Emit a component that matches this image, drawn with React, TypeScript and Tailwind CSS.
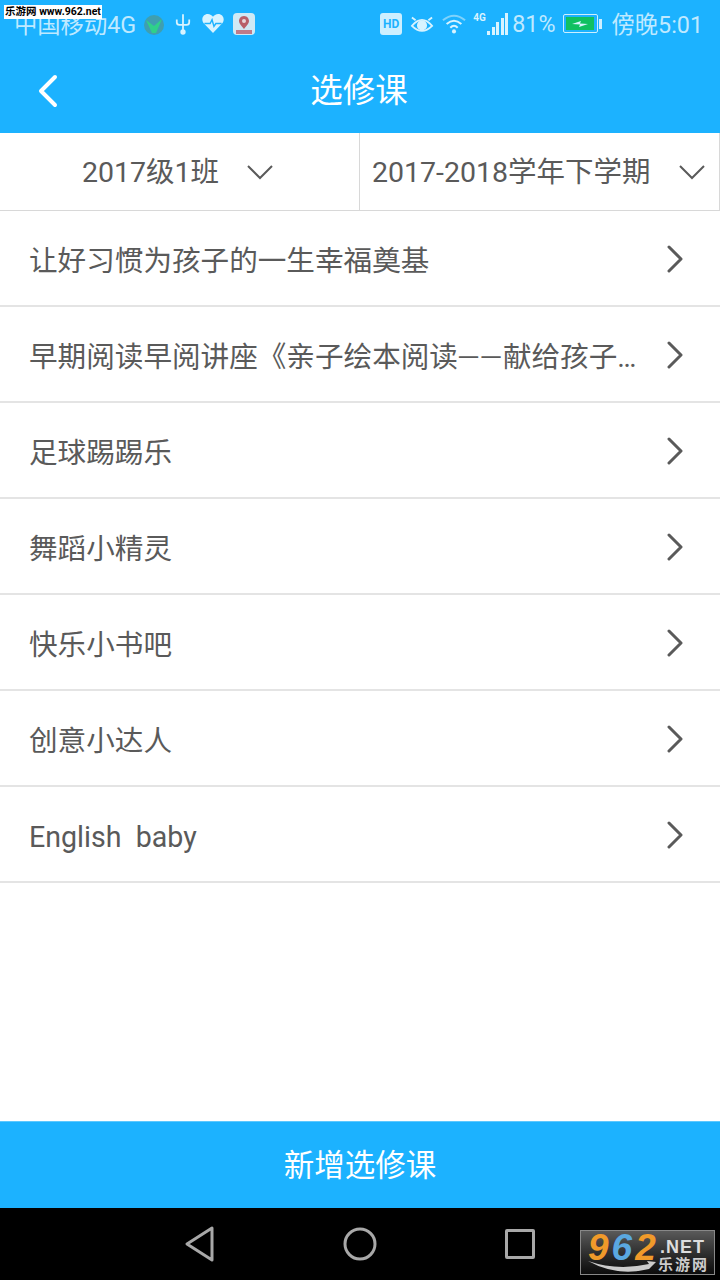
import React from "react";

const courses: React.ReactNode[] = [
  "让好习惯为孩子的一生幸福奠基",
  <>
    早期阅读早阅讲座《亲子绘本阅读
    <span className="align-[2px] text-[21px] tracking-[1.5px]">一一</span>
    献给孩子的礼物》
  </>,
  "足球踢踢乐",
  "舞蹈小精灵",
  "快乐小书吧",
  "创意小达人",
  "English  baby",
];

const font = "font-['Roboto','Noto_Sans_CJK_SC',sans-serif]";

const StatusBar = () => (
  <div className="flex h-[48px] items-center justify-between pl-[14px] pr-[17px] text-[23.3px] leading-none text-[#bfe9ff]">
    <div className="flex items-center">
      <span className="mt-[4px]">中国移动4G</span>
      {/* app icon */}
      <svg width="22" height="22" viewBox="0 0 22 22" className="ml-[7px] mt-[2px]">
        <circle cx="11" cy="11" r="10" fill="#3f9fb0" />
        <path d="M3 6 L11 12 L19 5 L13 19 L9 19 Z" fill="#2fd08a" />
      </svg>
      {/* usb */}
      <svg width="16" height="24" viewBox="0 0 18 24" fill="none" stroke="#d8f3ff" strokeWidth="2" className="ml-[10px] mt-[1px]">
        <path d="M9 1 V23 M2 7 V10 Q2 13 5 13 H13 Q16 13 16 10 V7" />
        <circle cx="9" cy="21" r="2" fill="#d8f3ff" />
      </svg>
      {/* heart */}
      <svg width="24" height="21" viewBox="0 0 24 22" className="ml-[10px]">
        <path d="M12 21 L2 10.5 C-1 6 2 1 6.5 1 C9 1 11 2.5 12 4 C13 2.5 15 1 17.5 1 C22 1 25 6 22 10.5 Z" fill="#d8f3ff" />
        <path d="M3 11 H9 L11 7 L13 14 L15 11 H21" fill="none" stroke="#1cb2ff" strokeWidth="1.5" />
      </svg>
      {/* map pin app */}
      <div className="ml-[8px] h-[22px] w-[22px] overflow-hidden rounded-[4px] bg-[#cfe9f5]">
        <svg width="22" height="22" viewBox="0 0 22 22">
          <path d="M11 3 C7.5 3 6 6 6 8 C6 11 9 13 11 16 C13 13 16 11 16 8 C16 6 14.5 3 11 3 Z" fill="#b8606a" />
          <circle cx="11" cy="8" r="2" fill="#e8d8dc" />
          <rect x="3" y="17" width="16" height="4" fill="#c07a88" />
        </svg>
      </div>
    </div>
    <div className="flex items-center">
      <div className="flex h-[22px] w-[22px] items-center justify-center rounded-[3px] bg-[#cdefff] text-[12px] font-bold text-[#1cb2ff]">
        HD
      </div>
      {/* eye */}
      <svg width="24" height="22" viewBox="0 0 26 24" fill="none" stroke="#d8f3ff" strokeWidth="2" className="ml-[8px]">
        <path d="M2 5 L6 8 M24 5 L20 8 M2 14 Q13 1 24 14 Q13 25 2 14 Z" />
        <circle cx="13" cy="13.5" r="4.5" fill="#d8f3ff" />
      </svg>
      {/* wifi */}
      <svg width="24" height="22" viewBox="0 0 26 22" fill="none" strokeWidth="2.2" className="ml-[8px]">
        <path d="M1 7 Q13 -3 25 7" stroke="#7fd2fb" />
        <path d="M5 11 Q13 4 21 11" stroke="#d8f3ff" />
        <path d="M9 15 Q13 11 17 15" stroke="#d8f3ff" />
        <circle cx="13" cy="19" r="2.2" fill="#d8f3ff" stroke="none" />
      </svg>
      {/* signal */}
      <div className="relative ml-[7px] flex h-[22px] w-[35px] items-end justify-end gap-[1.5px]">
        <span className="absolute left-0 top-0 text-[10px] font-bold leading-none text-[#d8f3ff]">4G</span>
        <div className="h-[4px] w-[3px] bg-[#d8f3ff]" />
        <div className="h-[8px] w-[3px] bg-[#d8f3ff]" />
        <div className="h-[13px] w-[3px] bg-[#d8f3ff]" />
        <div className="h-[17px] w-[3px] bg-[#d8f3ff]" />
        <div className="h-[22px] w-[3px] bg-[#d8f3ff]" />
      </div>
      <span className="ml-[4px] mt-[1px]">81%</span>
      {/* battery */}
      <div className="ml-[8px] flex items-center">
        <div className="flex h-[19px] w-[35px] items-center rounded-[2px] border border-[#cdefff] p-[2px]">
          <div className="flex h-full w-[28px] items-center justify-center bg-[#10c060]">
            <svg width="16" height="8" viewBox="0 0 16 8">
              <path d="M0 4 L9 1 L8 3.5 L16 4 L7 7 L8 4.5 Z" fill="#d8f3ff" />
            </svg>
          </div>
        </div>
        <div className="ml-[1px] h-[10px] w-[3px] bg-[#cdefff]" />
      </div>
      <span className="ml-[9px] mt-[4px]">傍晚5:01</span>
    </div>
  </div>
);

const Chevron = ({ dir }: { dir: "left" | "right" | "down" }) => {
  if (dir === "left") {
    return (
      <svg width="20" height="34" viewBox="0 0 20 34" fill="none" stroke="#fff" strokeWidth="4" strokeLinecap="round" strokeLinejoin="round">
        <path d="M17 3 L3 17 L17 31" />
      </svg>
    );
  }
  if (dir === "right") {
    return (
      <svg width="18" height="28" viewBox="0 0 18 28" fill="none" stroke="#5a5a5a" strokeWidth="3" strokeLinecap="round" strokeLinejoin="round">
        <path d="M3 2 L15 14 L3 26" />
      </svg>
    );
  }
  return (
    <svg width="26" height="16" viewBox="0 0 26 16" fill="none" stroke="#5a5a5a" strokeWidth="2">
      <path d="M1 2 L13 14 L25 2" />
    </svg>
  );
};

const NavBar = () => (
  <div className="flex h-[72px] items-center justify-center gap-[128px] bg-black">
    <svg width="30" height="36" viewBox="0 0 30 36" fill="none" stroke="#a8a8a8" strokeWidth="3" strokeLinejoin="round">
      <path d="M27 2 V34 L2 18 Z" />
    </svg>
    <svg width="34" height="34" viewBox="0 0 34 34" fill="none" stroke="#a8a8a8" strokeWidth="3">
      <circle cx="17" cy="17" r="15" />
    </svg>
    <div className="h-[30px] w-[30px] rounded-[2px] border-[3px] border-[#a8a8a8]" />
  </div>
);

export default function App() {
  return (
    <div className={`relative flex h-[1280px] w-[720px] flex-col overflow-hidden bg-white ${font}`}>
      {/* header */}
      <div className="h-[133px] bg-[#1cb2ff]">
        <StatusBar />
        <div className="relative flex h-[85px] items-center justify-center pr-[2px] pt-[2px]">
          <div className="absolute left-[38px] top-[26px]">
            <Chevron dir="left" />
          </div>
          <span className="text-[32.5px] leading-none text-white">选修课</span>
        </div>
      </div>

      {/* filters */}
      <div className="flex h-[78px] border-b border-[#d8d8d8] text-[28.5px] text-[#5a5a5a]">
        <div className="flex w-[360px] items-center justify-center gap-[28px] border-r border-[#d8d8d8] pr-[4px]">
          <span className="pt-[3px]">2017级1班</span>
          <Chevron dir="down" />
        </div>
        <div className="flex w-[360px] items-center justify-between border-r border-[#d8d8d8] pl-[12px] pr-[14px]">
          <span className="pt-[3px]">2017-2018学年下学期</span>
          <Chevron dir="down" />
        </div>
      </div>

      {/* course list */}
      <div className="flex-1">
        {courses.map((name, i) => (
          <div key={i} className="flex h-[96px] items-center border-b-2 border-[#e4e4e4] pl-[29px] pr-[36px] pt-[1px]">
            <div className="mr-[26px] min-w-0 flex-1 truncate whitespace-pre pt-[5px] text-[28.6px] text-[#5a5a5a]">{name}</div>
            <Chevron dir="right" />
          </div>
        ))}
      </div>

      {/* add button */}
      <div className="flex h-[87px] items-center justify-center border-t border-[#5cc8ff] bg-[#1cb2ff] pt-[2px] text-[30.5px] text-white">
        新增选修课
      </div>

      <NavBar />

      {/* watermarks */}
      <div className="absolute left-[4px] top-[5px] flex h-[14px] w-[98px] items-center justify-center bg-white text-[10.5px] font-bold leading-none text-black">
        乐游网 www.962.net
      </div>
      <div className="absolute left-[580px] top-[1230px] h-[45px] w-[135px] border border-[#888] bg-gradient-to-b from-[#5a5a5a] to-[#0c0c0c] font-['Liberation_Sans','Noto_Sans_CJK_SC',sans-serif]">
        <span className="absolute left-[7px] top-[-2px] text-[37px] font-bold italic leading-none tracking-[3px]">
          <span className="text-[#f09a2a]">9</span>
          <span className="text-[#5aa8e0]">6</span>
          <span className="text-[#f09a2a]">2</span>
        </span>
        <span className="absolute left-[79px] top-[7px] text-[18px] font-bold leading-none tracking-[1px] text-[#ddd]">.NET</span>
        <span className="absolute left-[77px] top-[26px] text-[15px] font-bold leading-none tracking-[2px] text-[#ccc]">乐游网</span>
        <svg width="70" height="14" viewBox="0 0 70 14" className="absolute left-[6px] top-[29px]">
          <path d="M1 1 Q30 11 62 4 L60 1 L69 2 L62 9 Q30 17 1 1 Z" fill="#ccc" />
        </svg>
      </div>
    </div>
  );
}
